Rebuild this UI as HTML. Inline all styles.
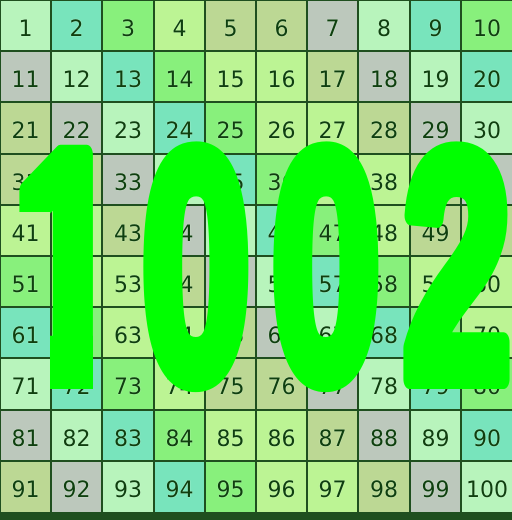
<!DOCTYPE html>
<html><head><style>
html,body{margin:0;padding:0;width:512px;height:512px;overflow:hidden;background:#1f4f1f}
.c{position:absolute;font-family:"DejaVu Sans","Liberation Sans",sans-serif;font-size:22px;color:#0f3f0f;text-align:center;line-height:58px;text-shadow:0 0 1px #e0ffe0}
.A{background:#b8f4bc}.B{background:#78e4bc}.C{background:#88f07c}.D{background:#bcf494}.E{background:#bcd894}.F{background:#bcc8bc}
svg{position:absolute;left:0;top:0}
.big{font-family:"Liberation Sans",Arial,sans-serif;font-weight:bold;font-size:326px;fill:#00ff00;stroke:#00ff00;stroke-width:20px;stroke-linejoin:round}
</style></head><body>
<div id="g"></div>
<script>
var rows=["ABCDEEFABC","FABCDDEFAB","EFABCDDEFA","EEFABCDDEF","DDEFABCDEE","CDDEFABCDD","BCDDEFABCD","ABCDEEFABC","FABCDDEFAB","EFABCDDEFA"];
var h="";
for(var r=0;r<10;r++)for(var c=0;c<10;c++){
var n=r*10+c+1;
var x=Math.round(c*51.2)+1,y=Math.round(r*51.2)+1;
var w=Math.round((c+1)*51.2)-x-1,hh=Math.round((r+1)*51.2)-y-1;
if(c==9)w=512-x;if(r==9)hh=512-y;
h+='<div class="c '+rows[r][c]+'" style="left:'+x+'px;top:'+y+'px;width:'+w+'px;height:'+hh+'px">'+n+'</div>';}
document.getElementById("g").innerHTML=h;
</script>
<svg width="512" height="512" viewBox="0 0 512 512">
<defs>
<clipPath id="cl"><rect x="0" y="0" width="512" height="212"/><rect x="50" y="200" width="43" height="200"/></clipPath>
</defs>
<g class="big" text-anchor="middle">
<g clip-path="url(#cl)"><g transform="translate(68,379) scale(0.62,1)"><text x="0" y="0">1</text></g></g>
<g transform="translate(196,379) scale(0.6,1)"><text x="0" y="0">0</text></g>
<g transform="translate(326,379) scale(0.6,1)"><text x="0" y="0">0</text></g>
<g transform="translate(457,379) scale(0.6,1)"><text x="0" y="0">2</text></g>
</g>
</svg>
</body></html>
